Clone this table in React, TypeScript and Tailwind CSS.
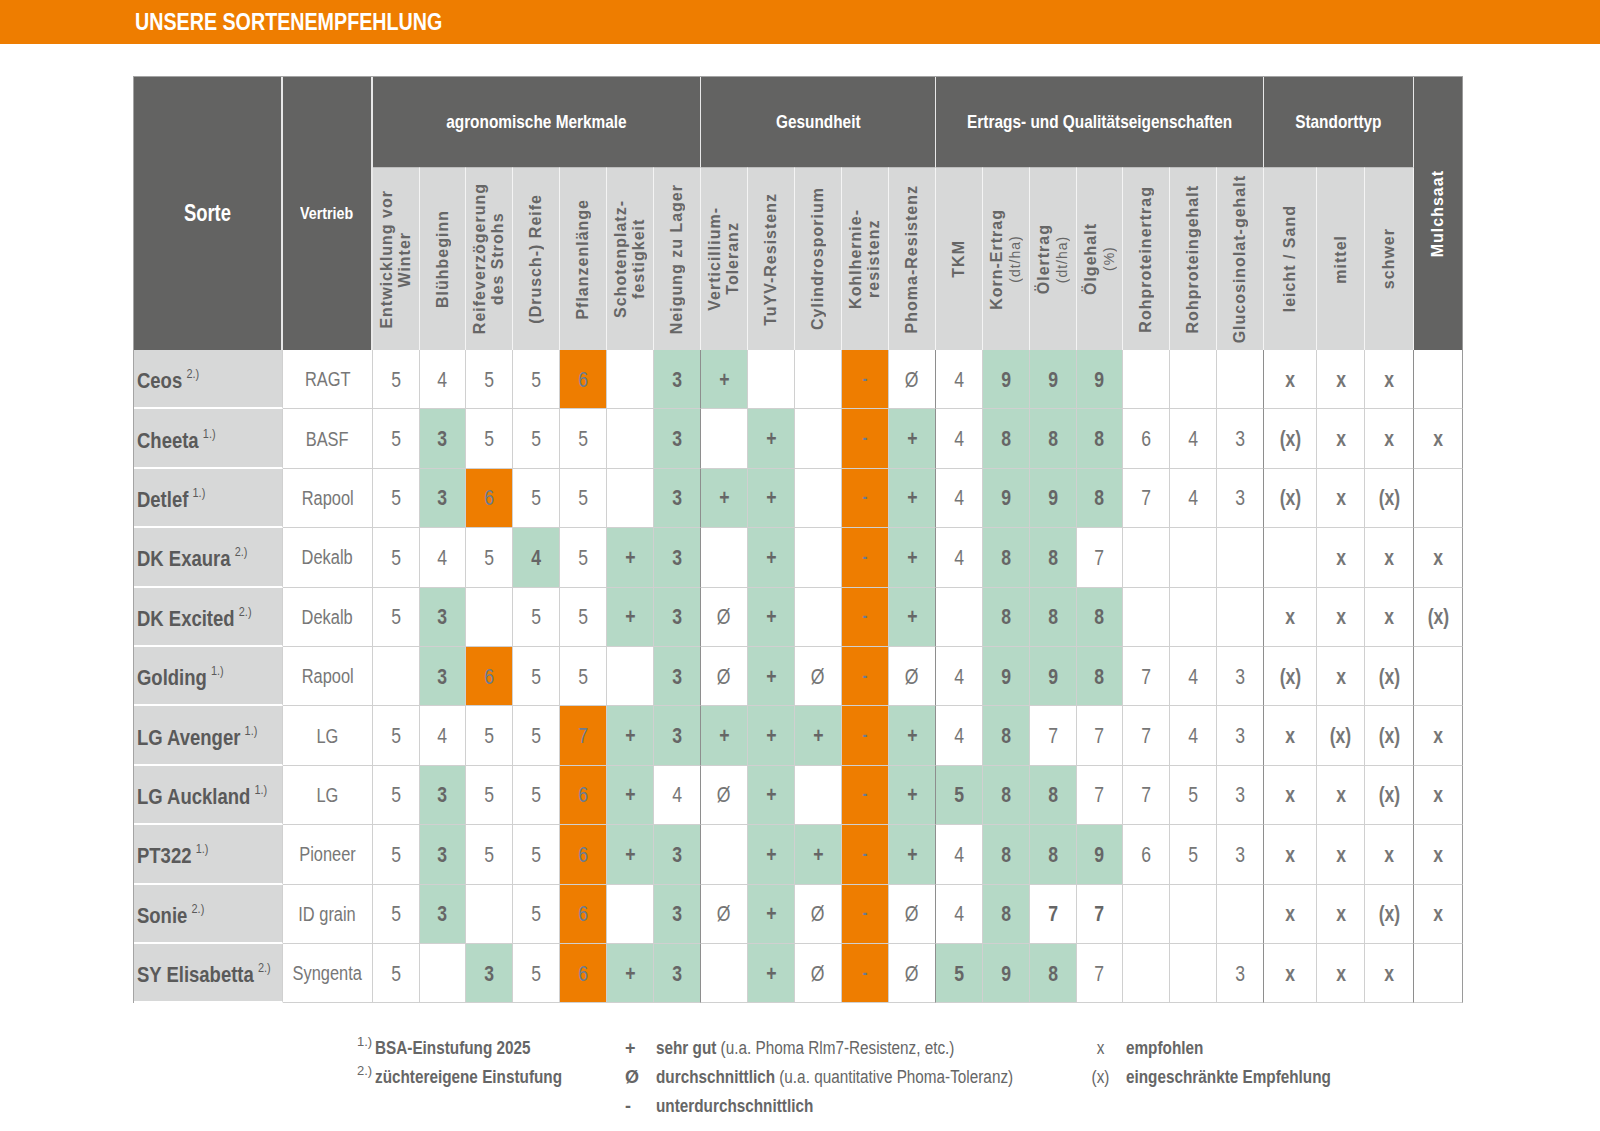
import React from 'react';

// condensed look: Liberation Sans squeezed horizontally (no narrow face installed)
const font = "[font-family:'Liberation_Sans',Arial,sans-serif]";

type Row = { name: string; note: string; firm: string; vals: string[] };

// suffix g = green cell, o = orange cell, b = bold text
const rows: Row[] = [
  { name: 'Ceos', note: '2.)', firm: 'RAGT', vals: ['5', '4', '5', '5', '6o', '', '3g', '+g', '', '', '-o', 'Ø', '4', '9g', '9g', '9g', '', '', '', 'x', 'x', 'x', ''] },
  { name: 'Cheeta', note: '1.)', firm: 'BASF', vals: ['5', '3g', '5', '5', '5', '', '3g', '', '+g', '', '-o', '+g', '4', '8g', '8g', '8g', '6', '4', '3', '(x)', 'x', 'x', 'x'] },
  { name: 'Detlef', note: '1.)', firm: 'Rapool', vals: ['5', '3g', '6o', '5', '5', '', '3g', '+g', '+g', '', '-o', '+g', '4', '9g', '9g', '8g', '7', '4', '3', '(x)', 'x', '(x)', ''] },
  { name: 'DK Exaura', note: '2.)', firm: 'Dekalb', vals: ['5', '4', '5', '4g', '5', '+g', '3g', '', '+g', '', '-o', '+g', '4', '8g', '8g', '7', '', '', '', '', 'x', 'x', 'x'] },
  { name: 'DK Excited', note: '2.)', firm: 'Dekalb', vals: ['5', '3g', '', '5', '5', '+g', '3g', 'Ø', '+g', '', '-o', '+g', '', '8g', '8g', '8g', '', '', '', 'x', 'x', 'x', '(x)'] },
  { name: 'Golding', note: '1.)', firm: 'Rapool', vals: ['', '3g', '6o', '5', '5', '', '3g', 'Ø', '+g', 'Ø', '-o', 'Ø', '4', '9g', '9g', '8g', '7', '4', '3', '(x)', 'x', '(x)', ''] },
  { name: 'LG Avenger', note: '1.)', firm: 'LG', vals: ['5', '4', '5', '5', '7o', '+g', '3g', '+g', '+g', '+g', '-o', '+g', '4', '8g', '7', '7', '7', '4', '3', 'x', '(x)', '(x)', 'x'] },
  { name: 'LG Auckland', note: '1.)', firm: 'LG', vals: ['5', '3g', '5', '5', '6o', '+g', '4', 'Ø', '+g', '', '-o', '+g', '5g', '8g', '8g', '7', '7', '5', '3', 'x', 'x', '(x)', 'x'] },
  { name: 'PT322', note: '1.)', firm: 'Pioneer', vals: ['5', '3g', '5', '5', '6o', '+g', '3g', '', '+g', '+g', '-o', '+g', '4', '8g', '8g', '9g', '6', '5', '3', 'x', 'x', 'x', 'x'] },
  { name: 'Sonie', note: '2.)', firm: 'ID grain', vals: ['5', '3g', '', '5', '6o', '', '3g', 'Ø', '+g', 'Ø', '-o', 'Ø', '4', '8g', '7b', '7b', '', '', '', 'x', 'x', '(x)', 'x'] },
  { name: 'SY Elisabetta', note: '2.)', firm: 'Syngenta', vals: ['5', '', '3g', '5', '6o', '+g', '3g', '', '+g', 'Ø', '-o', 'Ø', '5g', '9g', '8g', '7', '', '', '3', 'x', 'x', 'x', ''] },
];

const widths = [47, 46, 47, 47, 47, 47, 47, 47, 47, 47, 47, 47, 47, 47, 47, 46, 47, 47, 47, 53, 48, 49, 49];
const groupEnds = [6, 11, 18, 21];

type Head = { t: string; sub?: string };
const heads: Head[] = [
  { t: 'Entwicklung vor\nWinter' },
  { t: 'Blühbeginn' },
  { t: 'Reifeverzögerung\ndes Strohs' },
  { t: '(Drusch-) Reife' },
  { t: 'Pflanzenlänge' },
  { t: 'Schotenplatz-\nfestigkeit' },
  { t: 'Neigung zu Lager' },
  { t: 'Verticillium-\nToleranz' },
  { t: 'TuYV-Resistenz' },
  { t: 'Cylindrosporium' },
  { t: 'Kohlhernie-\nresistenz' },
  { t: 'Phoma-Resistenz' },
  { t: 'TKM' },
  { t: 'Korn-Ertrag', sub: '(dt/ha)' },
  { t: 'Ölertrag', sub: '(dt/ha)' },
  { t: 'Ölgehalt', sub: '(%)' },
  { t: 'Rohproteinertrag' },
  { t: 'Rohproteingehalt' },
  { t: 'Glucosinolat-gehalt' },
  { t: 'leicht / Sand' },
  { t: 'mittel' },
  { t: 'schwer' },
];

function Cell({ raw, idx }: { raw: string; idx: number }) {
  const kind = raw.length > 1 && /[gob]$/.test(raw) ? raw.slice(-1) : '';
  const v = kind ? raw.slice(0, -1) : raw;
  const edge = groupEnds.includes(idx) ? 'border-r-[#8e8e8e]' : 'border-r-[#d0d0d0]';
  const last = idx === 22 ? 'border-r-[#9a9a9a]' : edge;
  let bg = 'bg-white text-[#767676]';
  if (kind === 'g') bg = 'bg-[#b5d9c6] text-[#666666] font-bold';
  if (kind === 'o') bg = 'bg-[#ee7d00] text-[#6a7c93]';
  if (kind === 'b') bg = 'bg-white text-[#666666] font-bold';
  const isX = v.includes('x');
  const size = v === '-' ? 'text-[18px] font-bold' : isX ? 'text-[22px] font-bold text-[#636363]' : 'text-[22px]';
  return (
    <td className={`border-r border-b border-b-[#d0d0d0] text-center align-middle ${last} ${bg} ${size}`}>
      <span className="inline-block scale-x-[0.8]">{v}</span>
    </td>
  );
}

export default function App() {
  return (
    <div className={`w-[1600px] min-h-[1131px] bg-white ${font}`}>
      <div className="h-[44px] bg-[#ee7d00] flex items-center pl-[135px]">
        <span className="inline-block origin-left scale-x-[0.82] text-white font-bold text-[24px] leading-none">
          UNSERE SORTENEMPFEHLUNG
        </span>
      </div>

      <div className="ml-[133px] mt-[32px] w-[1330px]">
        <table className="table-fixed border-separate border-spacing-0 w-[1330px] border-t border-l border-[#a4a4a4]">
          <colgroup>
            <col className="w-[149px]" />
            <col className="w-[90px]" />
            {widths.map((w, i) => (
              <col key={i} style={{ width: w }} />
            ))}
          </colgroup>
          <thead>
            <tr className="h-[90px]">
              <th rowSpan={2} className="bg-[#636362] text-white text-[23px] font-bold border-r-2 border-r-[#e8e8e8]">
                <span className="inline-block scale-x-[0.8]">Sorte</span>
              </th>
              <th rowSpan={2} className="bg-[#636362] text-white text-[17px] font-bold border-r-2 border-r-[#e8e8e8]">
                <span className="inline-block scale-x-[0.84]">Vertrieb</span>
              </th>
              <th colSpan={7} className="bg-[#636362] text-white text-[19px] font-bold border-r border-r-[#e8e8e8]">
                <span className="inline-block scale-x-[0.81] whitespace-nowrap">agronomische Merkmale</span>
              </th>
              <th colSpan={5} className="bg-[#636362] text-white text-[19px] font-bold border-r border-r-[#e8e8e8]">
                <span className="inline-block scale-x-[0.81] whitespace-nowrap">Gesundheit</span>
              </th>
              <th colSpan={7} className="bg-[#636362] text-white text-[19px] font-bold border-r border-r-[#e8e8e8]">
                <span className="inline-block scale-x-[0.81] whitespace-nowrap">Ertrags- und Qualitätseigenschaften</span>
              </th>
              <th colSpan={3} className="bg-[#636362] text-white text-[19px] font-bold border-r border-r-[#e8e8e8]">
                <span className="inline-block scale-x-[0.81] whitespace-nowrap">Standorttyp</span>
              </th>
              <th rowSpan={2} className="bg-[#636362] text-white border-r border-r-[#9a9a9a]">
                <div className="flex items-center justify-center">
                  <span className="[writing-mode:vertical-rl] rotate-180 text-[16px] font-bold tracking-[1px]">
                    Mulchsaat
                  </span>
                </div>
              </th>
            </tr>
            <tr className="h-[183px]">
              {heads.map((h, i) => (
                <th key={i} className="bg-[#d7d8d8] p-0 border-r border-r-[#f4f4f4] border-t border-t-[#bdbdbd]">
                  <div className="flex items-center justify-center h-[182px]">
                    <span className="[writing-mode:vertical-rl] rotate-180 whitespace-pre-line text-center text-[16px] leading-[18px] font-bold tracking-[1px] text-[#666666]">
                      {h.t}
                      {h.sub && (
                        <>
                          <br />
                          <span className="font-normal text-[14px]">{h.sub}</span>
                        </>
                      )}
                    </span>
                  </div>
                </th>
              ))}
            </tr>
          </thead>
          <tbody>
            {rows.map((r) => (
              <tr key={r.name} className="h-[59.4px]">
                <td className="bg-[#d7d8d8] border-b-2 border-b-white border-r border-r-[#d0d0d0] pl-[3px] text-left align-middle whitespace-nowrap">
                  <span className="inline-block origin-left scale-x-[0.84] pt-[4px]">
                    <span className="text-[22px] font-bold text-[#5a5a5a]">{r.name}</span>
                    <span className="relative -top-[10px] ml-[5px] text-[13px] text-[#5a5a5a]">{r.note}</span>
                  </span>
                </td>
                <td className="bg-white border-r border-b border-[#d0d0d0] text-center align-middle text-[20px] text-[#777777] whitespace-nowrap">
                  <span className="inline-block scale-x-[0.82]">{r.firm}</span>
                </td>
                {r.vals.map((v, i) => (
                  <Cell key={i} raw={v} idx={i} />
                ))}
              </tr>
            ))}
          </tbody>
        </table>
      </div>

      <div className="ml-[357px] mt-[31px] flex text-[18px] leading-[29px] text-[#666666] whitespace-nowrap">
        <div className="w-[268px]">
          <div className="flex">
            <span className="text-[13px] leading-[16px] w-[18px]">1.)</span>
            <span className="inline-block origin-left scale-x-[0.85] font-bold">BSA-Einstufung 2025</span>
          </div>
          <div className="flex">
            <span className="text-[13px] leading-[16px] w-[18px]">2.)</span>
            <span className="inline-block origin-left scale-x-[0.85] font-bold">züchtereigene Einstufung</span>
          </div>
        </div>
        <div className="w-[465px]">
          <div className="flex">
            <span className="w-[31px] font-bold">+</span>
            <span className="inline-block origin-left scale-x-[0.85]">
              <b>sehr gut</b> (u.a. Phoma Rlm7-Resistenz, etc.)
            </span>
          </div>
          <div className="flex">
            <span className="w-[31px] font-bold">Ø</span>
            <span className="inline-block origin-left scale-x-[0.85]">
              <b>durchschnittlich</b> (u.a. quantitative Phoma-Toleranz)
            </span>
          </div>
          <div className="flex">
            <span className="w-[31px] font-bold">-</span>
            <span className="inline-block origin-left scale-x-[0.85] font-bold">unterdurchschnittlich</span>
          </div>
        </div>
        <div>
          <div className="flex">
            <span className="w-[20px] text-center">
              <span className="inline-block scale-x-[0.85]">x</span>
            </span>
            <span className="ml-[16px] inline-block origin-left scale-x-[0.85] font-bold">empfohlen</span>
          </div>
          <div className="flex">
            <span className="w-[20px] text-center">
              <span className="inline-block scale-x-[0.85]">(x)</span>
            </span>
            <span className="ml-[16px] inline-block origin-left scale-x-[0.85] font-bold">eingeschränkte Empfehlung</span>
          </div>
        </div>
      </div>
    </div>
  );
}
